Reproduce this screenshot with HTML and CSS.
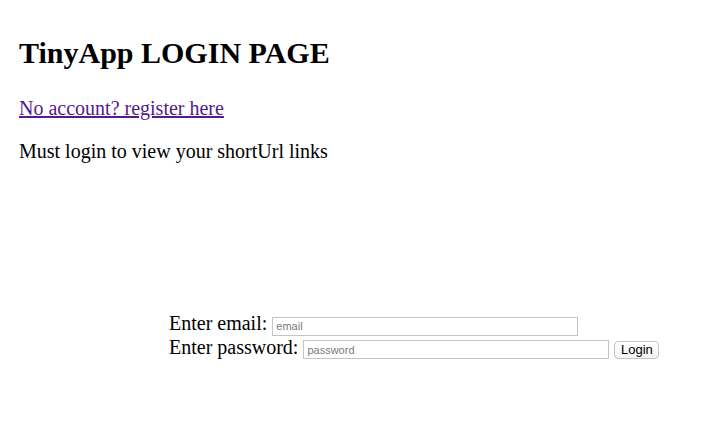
FILE: index.html
```html
<!DOCTYPE html>
<html>
<head>
<meta charset="utf-8">
<title>TinyApp Login</title>
<link rel="stylesheet" href="styles.css">
</head>
<body>
<h1 class="title">TinyApp LOGIN PAGE</h1>
<p class="line"><a class="reg-link" href="#register">No account? register here</a></p>
<p class="line">Must login to view your shortUrl links</p>
<form class="login-form">
<label class="field">Enter email: <input class="text-input" type="text" placeholder="email"></label><br>
<label class="field">Enter password: <input class="text-input" type="password" placeholder="password"></label> <button class="login-btn" type="button">Login</button>
</form>
</body>
</html>
```
FILE: styles.css
```css
html, body {
  background: #ffffff;
}
body {
  margin: 0;
  padding: 0 20px 0 19px;
  font-family: "Liberation Serif", "Times New Roman", serif;
  font-size: 20px;
  color: #000000;
}
.title {
  font-size: 30px;
  font-weight: bold;
  margin: 36px 0 27px;
}
.line {
  margin: 20px 0;
}
.reg-link {
  color: #551a8b;
  text-decoration: underline;
}
.login-form {
  margin-top: 149px;
  padding-left: 150px;
}
.text-input {
  box-sizing: border-box;
  width: 306px;
  height: 19px;
  margin: 0;
  padding: 1px 3px;
  border: 1px solid #c4c4c4;
  border-radius: 0;
  font-family: "Liberation Sans", Arial, sans-serif;
  font-size: 11px;
  color: #000;
  background: #fff;
}
.text-input::placeholder {
  color: #7a7a7a;
}
.login-btn {
  box-sizing: border-box;
  height: 18px;
  width: 45px;
  margin: 0;
  padding: 0 5px;
  border: 1px solid #c4c4c4;
  border-radius: 4px;
  background: linear-gradient(#ffffff, #f4f4f4);
  font-family: "Liberation Sans", Arial, sans-serif;
  font-size: 13px;
  line-height: 14px;
  color: #000;
}
```
